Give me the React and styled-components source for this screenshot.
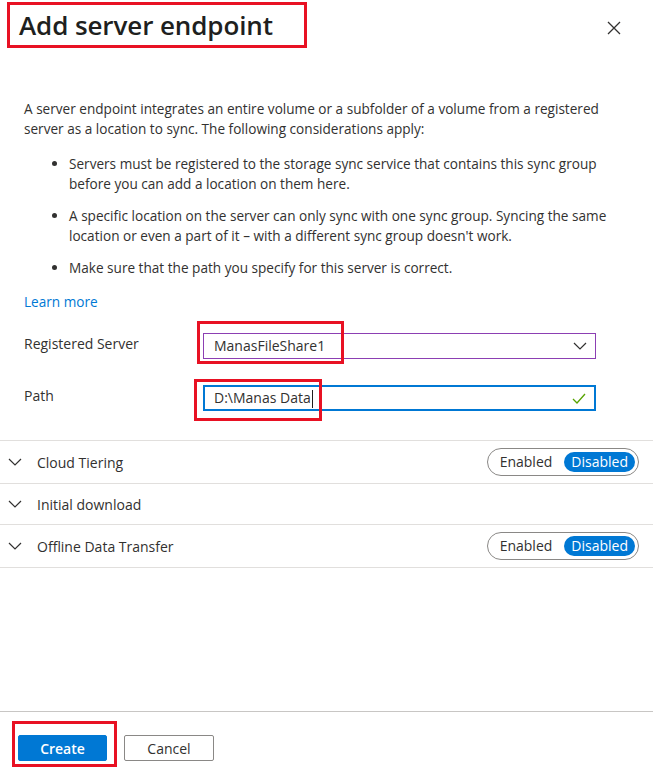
import React from "react";
import styled, { createGlobalStyle } from "styled-components";

const GlobalStyle = createGlobalStyle`
  html, body {
    margin: 0;
    padding: 0;
    background: #ffffff;
  }
  body {
    font-family: "Open Sans", "Noto Sans", Arial, sans-serif;
    color: #323130;
  }
`;

const Panel = styled.div`
  width: 653px;
  height: 775px;
  display: flex;
  flex-direction: column;
  background: #fff;
  overflow: hidden;
`;

const Header = styled.header`
  display: flex;
  justify-content: space-between;
  align-items: flex-start;
  padding: 2px 30px 0 7px;
`;

const Marked = styled.div`
  border: 3px solid #e81123;
  padding: ${({ $pad }) => $pad || "0"};
`;

const Title = styled.h1`
  margin: 0;
  font-size: 26px;
  font-weight: 600;
  line-height: 40px;
  color: #201f1e;
  letter-spacing: -0.1px;
`;

const CloseButton = styled.button`
  border: none;
  background: none;
  padding: 0;
  margin-top: 17px;
  width: 18px;
  height: 18px;
  display: flex;
  align-items: center;
  justify-content: center;
  cursor: pointer;
`;

const Body = styled.div`
  padding: 51px 24px 0 24px;
  font-size: 13.6px;
  line-height: 20px;
`;

const Intro = styled.p`
  margin: 0 0 15px;
  width: 600px;
`;

const Bullets = styled.ul`
  margin: 0 0 14px;
  padding-left: 45px;

  li {
    margin-bottom: 12px;
  }
  li:last-child {
    margin-bottom: 0;
  }
`;

const Link = styled.a`
  color: #0078d4;
  text-decoration: none;
  display: block;
  margin-bottom: 21px;
`;

const Form = styled.div`
  display: grid;
  grid-template-columns: 179px 393px;
  row-gap: 26px;
  align-items: center;
  padding-bottom: 29px;
`;

const Label = styled.label`
  font-size: 14px;
  margin-top: -4px;
`;

const Field = styled.div`
  position: relative;
  height: 26px;
  box-sizing: border-box;
  display: flex;
  align-items: center;
  justify-content: space-between;
  padding: 0 8px 0 10px;
  font-size: 14px;
  border: ${({ $focused }) =>
    $focused ? "2px solid #0078d4" : "1px solid #8c3fb3"};
  padding-left: ${({ $focused }) => ($focused ? "9px" : "10px")};
`;

const Callout = styled.span`
  position: absolute;
  border: 3px solid #e81123;
  pointer-events: none;
  left: ${({ $l }) => $l}px;
  top: ${({ $t }) => $t}px;
  width: ${({ $w }) => $w}px;
  height: ${({ $h }) => $h}px;
`;

const Caret = styled.span`
  display: inline-block;
  width: 1px;
  height: 18px;
  background: #201f1e;
  vertical-align: middle;
  margin-left: 1px;
`;

const Sections = styled.div`
  border-top: 1px solid #e1dfdd;
`;

const SectionRow = styled.div`
  display: flex;
  align-items: center;
  justify-content: space-between;
  min-height: 26px;
  padding: 7px 14px 7px 8px;
  border-bottom: 1px solid #e1dfdd;
  font-size: 14px;
`;

const SectionTitle = styled.div`
  display: flex;
  align-items: center;
  gap: 15px;
`;

const Toggle = styled.div`
  display: flex;
  align-items: center;
  height: 28px;
  box-sizing: border-box;
  border: 1px solid #8a8886;
  border-radius: 14px;
  padding: 0 3px 0 12px;
  gap: 12px;
  font-size: 14px;
`;

const ToggleOption = styled.span`
  padding: ${({ $active }) => ($active ? "0 7px" : "0")};
  height: 20px;
  line-height: 20px;
  border-radius: 10px;
  background: ${({ $active }) => ($active ? "#0078d4" : "transparent")};
  color: ${({ $active }) => ($active ? "#fff" : "#323130")};
`;

const Spacer = styled.div`
  flex: 1;
`;

const Footer = styled.footer`
  border-top: 1px solid #c8c6c4;
  padding: 9px 0 8px 12px;
  display: flex;
  align-items: flex-end;
  gap: 7px;
`;

const Button = styled.button`
  width: ${({ $w }) => $w}px;
  height: 26px;
  border-radius: 2px;
  font-family: inherit;
  font-size: 14px;
  cursor: pointer;
  border: 1px solid ${({ $primary }) => ($primary ? "#0078d4" : "#8a8886")};
  background: ${({ $primary }) => ($primary ? "#0078d4" : "#fff")};
  color: ${({ $primary }) => ($primary ? "#fff" : "#323130")};
  font-weight: ${({ $primary }) => ($primary ? 600 : 400)};
  margin-bottom: ${({ $lift }) => $lift || 0}px;
`;

const Chevron = () => (
  <svg width="14" height="8" viewBox="0 0 14 8">
    <path d="M1 1 L7 7 L13 1" fill="none" stroke="#323130" strokeWidth="1.2" />
  </svg>
);

const Section = ({ title, toggle }) => (
  <SectionRow>
    <SectionTitle>
      <Chevron />
      {title}
    </SectionTitle>
    {toggle && (
      <Toggle>
        <ToggleOption>Enabled</ToggleOption>
        <ToggleOption $active>Disabled</ToggleOption>
      </Toggle>
    )}
  </SectionRow>
);

export default function App() {
  return (
    <Panel>
      <GlobalStyle />
      <Header>
        <Marked $pad="0 31px 0 9px">
          <Title>Add server endpoint</Title>
        </Marked>
        <CloseButton aria-label="Close">
          <svg width="14" height="14" viewBox="0 0 14 14">
            <path d="M1 1 L13 13 M13 1 L1 13" stroke="#323130" strokeWidth="1.3" />
          </svg>
        </CloseButton>
      </Header>

      <Body>
        <Intro>
          A server endpoint integrates an entire volume or a subfolder of a volume
          from a registered server as a location to sync. The following
          considerations apply:
        </Intro>
        <Bullets>
          <li>
            Servers must be registered to the storage sync service that contains
            this sync group before you can add a location on them here.
          </li>
          <li>
            A specific location on the server can only sync with one sync group.
            Syncing the same location or even a part of it – with a different sync
            group doesn't work.
          </li>
          <li>Make sure that the path you specify for this server is correct.</li>
        </Bullets>
        <Link href="#">Learn more</Link>

        <Form>
          <Label>Registered Server</Label>
          <Field>
            <span>ManasFileShare1</span>
            <Chevron />
            <Callout $l={-7} $t={-13} $w={141} $h={37} />
          </Field>
          <Label>Path</Label>
          <Field $focused>
            <span>
              D:\Manas Data
              <Caret />
            </span>
            <svg width="14" height="11" viewBox="0 0 14 11">
              <path d="M1 6 L5 10 L13 1" fill="none" stroke="#57a300" strokeWidth="1.3" />
            </svg>
            <Callout $l={-11} $t={-8} $w={122} $h={36} />
          </Field>
        </Form>
      </Body>

      <Sections>
        <Section title="Cloud Tiering" toggle />
        <Section title="Initial download" />
        <Section title="Offline Data Transfer" toggle />
      </Sections>

      <Spacer />

      <Footer>
        <Marked $pad="11px 7px 3px 3px">
          <Button $primary $w={89}>Create</Button>
        </Marked>
        <Button $w={90} $lift={6}>Cancel</Button>
      </Footer>
    </Panel>
  );
}
